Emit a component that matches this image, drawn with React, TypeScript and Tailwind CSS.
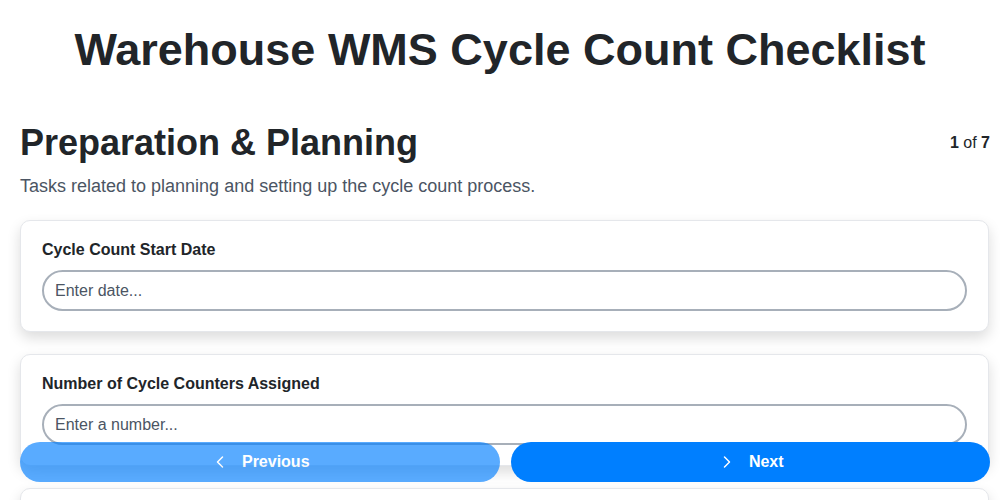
import { ChevronLeft, ChevronRight } from "lucide-react"

const fields = [
  { label: "Cycle Count Start Date", placeholder: "Enter date..." },
  { label: "Number of Cycle Counters Assigned", placeholder: "Enter a number..." },
  { label: "Count Frequency", placeholder: "Enter frequency..." },
]

export default function App() {
  return (
    <div className="min-h-screen bg-white text-[#212529]" style={{ fontFamily: '"Liberation Sans", Arial, sans-serif' }}>
      <h1 className="px-5 pt-[22px] text-center text-[45px] font-bold leading-[56px]">Warehouse WMS Cycle Count Checklist</h1>

      <div className="pb-24 pl-5 pr-[10px]">
        {/* section header */}
        <div className="mt-[43px] flex items-start justify-between">
          <h2 className="text-[36px] font-bold leading-[44px]">Preparation &amp; Planning</h2>
          <span className="mt-[10px] text-[16px]">
            <b>1</b> of <b>7</b>
          </span>
        </div>
        <p className="mt-[10px] text-[18px] leading-[22px] text-[#4b5563]">
          Tasks related to planning and setting up the cycle count process.
        </p>

        <div className="mt-[23px] flex flex-col gap-[22px]">
          {fields.map((f) => (
            <div
              key={f.label}
              className="mr-[1px] rounded-[10px] border border-[#e5e7eb] bg-white px-[21px] pb-[20px] pt-[19px] shadow-[0_6px_14px_rgba(0,0,0,0.14)]"
            >
              <label className="block text-[16px] font-bold leading-[20px]">{f.label}</label>
              <input
                className="mt-[10px] h-[41px] w-full rounded-full border-2 border-[#a7afb9] bg-white px-[11px] text-[16px] text-[#212529] placeholder:text-[#4b5563] outline-none"
                placeholder={f.placeholder}
              />
            </div>
          ))}
        </div>
      </div>

      {/* nav bar */}
      <div className="fixed bottom-[18px] left-5 right-[10px] flex gap-[11px]">
        <button className="flex h-[40px] flex-1 items-center justify-center gap-[12px] rounded-full bg-[#007fff] text-[16px] font-bold text-white opacity-65">
          <ChevronLeft size={20} strokeWidth={1.75} />
          Previous
        </button>
        <button className="flex h-[40px] flex-1 items-center justify-center gap-[12px] rounded-full bg-[#007fff] text-[16px] font-bold text-white">
          <ChevronRight size={20} strokeWidth={1.75} />
          Next
        </button>
      </div>
    </div>
  )
}
